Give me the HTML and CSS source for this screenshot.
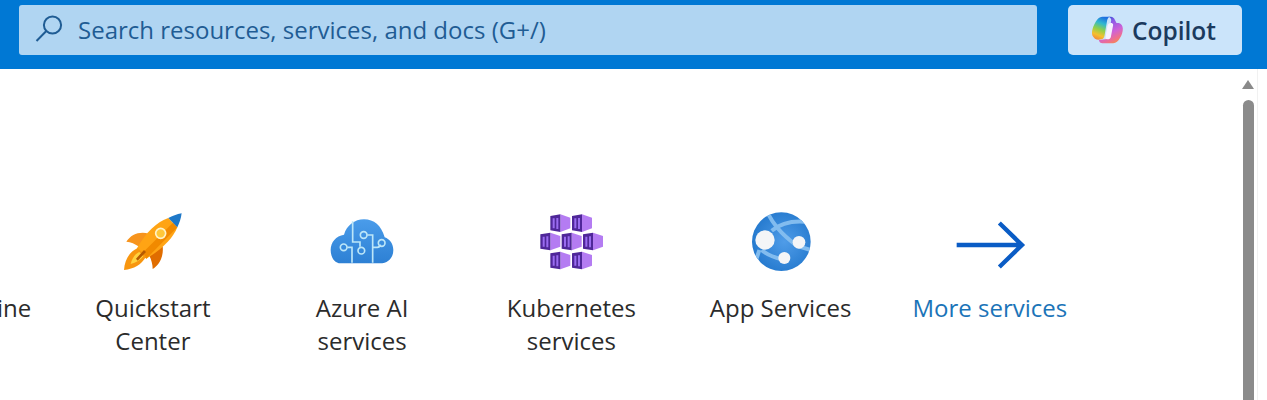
FILE: index.html
```html
<!DOCTYPE html>
<html lang="en">
<head>
<meta charset="utf-8">
<title>Azure services</title>
<link rel="stylesheet" href="styles.css">
</head>
<body>
<header class="topbar">
  <div class="search">
    <svg class="search-icon" viewBox="0 0 30 30" aria-hidden="true"><circle cx="18.5" cy="11" r="8.6"/><path d="M12.3 17 2.5 27"/></svg>
    <span>Search resources, services, and docs (G+/)</span>
  </div>
  <button class="copilot">
    <svg class="copilot-icon" viewBox="155 50 92 84" aria-hidden="true">
      <defs>
        <linearGradient id="cpL" x1="0.6" y1="0" x2="0.3" y2="1"><stop offset="0" stop-color="#1d6fe0"/><stop offset=".28" stop-color="#2fb8d0"/><stop offset=".55" stop-color="#8fd04a"/><stop offset=".8" stop-color="#f5c02e"/><stop offset="1" stop-color="#f28a3a"/></linearGradient>
        <linearGradient id="cpR" x1="0.25" y1="0" x2="0.7" y2="1"><stop offset="0" stop-color="#2050d0"/><stop offset=".25" stop-color="#8a5ae8"/><stop offset=".6" stop-color="#cf62d6"/><stop offset=".85" stop-color="#f0708a"/><stop offset="1" stop-color="#f58a50"/></linearGradient>
      </defs>
      <path fill="url(#cpR)" d="M203 52h8c6 0 10 4 12 9l5 10h7c7 2 12 9 12 17 0 9-3 19-9 29-5 8-11 15-20 15h-32c-6 0-10-4-11-10l20-2c6-1 9-6 10-12l7-44c1-6-3-11-9-12z"/>
      <path fill="url(#cpL)" d="M186 52h22c-5 2-7 6-8 11l-8 46c-1 6-4 10-10 11l-8 1c-8 0-14-5-18-12-2-5-2-12 0-19 3-11 8-22 15-30 4-5 9-8 15-8z"/>
      <path fill="#f6f2ff" d="M211 71c4 0 7 2 7 6l-7 36c-1 4-5 7-9 7-5 0-8-3-7-7l6-33c1-5 5-9 10-9z"/>
    </svg>
    <span>Copilot</span>
  </button>
</header>
<div class="page">
  <main class="content">
    <div class="tiles">
      <a class="tile">
        <span class="tile-icon"></span>
        <span class="label">Virtual machine</span>
      </a>
      <a class="tile">
        <svg class="tile-icon" viewBox="-6 0 330 240" aria-hidden="true">
          <path fill="#f7941d" d="M79 125c14-22 40-32 68-24l-28 40c-15-10-26-15-40-16z"/>
          <path fill="#e06d00" d="M158 207c18-10 34-36 30-68l-40 28c6 12 10 26 10 40z"/>
          <path fill="#ffa414" d="M205 54c-34 12-66 40-96 94l30 28c50-30 80-62 93-94z"/>
          <path fill="#f18a00" d="M232 82 139 176l-15-14 95-94z"/>
          <path fill="#1e78c8" d="M245 40c-15 3-28 8-40 14l27 28c6-12 11-27 13-42z"/>
          <path fill="#f8960f" d="M72 210c2-30 16-56 42-66l24 26c-14 24-36 36-66 40z"/>
          <path fill="#ffd23f" d="M92 192c4-16 12-30 26-36l12 12c-8 12-22 20-38 24z"/>
          <path fill="#b65a00" d="M108 176l24-26 6 6-25 26z"/>
          <circle cx="182" cy="100" r="15" fill="#ffc83a" stroke="#fff3c8" stroke-width="5"/>
        </svg>
        <span class="label">Quickstart Center</span>
      </a>
      <a class="tile">
        <svg class="tile-icon" viewBox="-9 0 330 240" aria-hidden="true">
          <defs><linearGradient id="cloud" x1="0" y1="0" x2="0" y2="1"><stop offset="0" stop-color="#4a9cea"/><stop offset="1" stop-color="#2d80d4"/></linearGradient></defs>
          <path fill="url(#cloud)" d="M92 190C72 190 62 170 62 150c0-24 16-42 40-46 8-28 32-46 60-46 30 0 52 18 62 54 16 6 26 20 26 38 0 24-16 40-40 40z"/>
          <g fill="none" stroke="#bce6f8" stroke-width="5">
            <path d="M128 64v62h22v14"/>
            <path d="M112 142h14v46"/>
            <path d="M172 105h16v83"/>
            <path d="M188 142h14c6 0 8-3 10-8"/>
            <circle cx="101" cy="142" r="10"/>
            <circle cx="154" cy="152" r="10"/>
            <circle cx="161" cy="105" r="10"/>
            <circle cx="215" cy="129" r="10"/>
          </g>
        </svg>
        <span class="label">Azure AI services</span>
      </a>
      <a class="tile">
        <svg class="tile-icon" viewBox="-13 0 330 240" aria-hidden="true">
          <defs>
            <g id="cube">
              <path fill="#b47cf2" d="M30 0 60 10V42L30 53z"/>
              <path fill="#4f2799" d="M0 5 30 0V53L0 48z"/>
              <path fill="#9a6cf0" d="M7 12h6v30H7zM18 11h6v33h-6z"/>
            </g>
          </defs>
          <use href="#cube" x="90" y="43"/>
          <use href="#cube" x="155" y="43"/>
          <use href="#cube" x="60" y="98"/>
          <use href="#cube" x="124" y="98"/>
          <use href="#cube" x="188" y="98"/>
          <use href="#cube" x="90" y="155"/>
          <use href="#cube" x="155" y="155"/>
        </svg>
        <span class="label">Kubernetes services</span>
      </a>
      <a class="tile">
        <svg class="tile-icon" viewBox="-12 0 330 240" aria-hidden="true">
          <defs>
            <radialGradient id="globe" cx=".55" cy=".5" r=".6"><stop offset="0" stop-color="#4f9ce8"/><stop offset="1" stop-color="#2277cc"/></radialGradient>
            <clipPath id="globeClip"><circle cx="154" cy="125" r="88"/></clipPath>
          </defs>
          <circle cx="154" cy="125" r="88" fill="url(#globe)"/>
          <g clip-path="url(#globeClip)" fill="none" stroke="#82bcef" stroke-width="12">
            <path d="M112 38c14 26 34 60 90 100l40 12"/>
            <path d="M125 92c24-20 60-32 110-26"/>
            <path d="M95 150c16 14 36 22 60 28"/>
            <path d="M88 150 70 205"/>
          </g>
          <circle cx="105" cy="120" r="29" fill="#f4f5f7"/>
          <circle cx="207" cy="127" r="19" fill="#f4f5f7"/>
          <circle cx="163" cy="174" r="18" fill="#f4f5f7"/>
        </svg>
        <span class="label">App Services</span>
      </a>
      <a class="tile more">
        <svg class="tile-icon" viewBox="105 0 330 240" aria-hidden="true">
          <path fill="none" stroke="#0a5cc5" stroke-width="13" d="M170 135H366M298 69l68 66-68 66"/>
        </svg>
        <span class="label">More services</span>
      </a>
    </div>
  </main>
  <aside class="scrollbar">
    <span class="arrow"></span>
    <span class="thumb"></span>
  </aside>
</div>
</body>
</html>
```
FILE: styles.css
```css
* { box-sizing: border-box; }
html, body { margin: 0; height: 400px; overflow: hidden; background: #fff; }
body { font-family: "Open Sans", "Noto Sans", sans-serif; }

.topbar {
  height: 69px;
  background: #0078d4;
  display: flex;
  align-items: flex-start;
  padding: 5px 25px 0 19px;
  gap: 31px;
}
.search {
  flex: 1;
  height: 50px;
  background: #b0d5f2;
  border-radius: 3px;
  display: flex;
  align-items: center;
  padding: 0 0 2px 15px;
  gap: 14px;
  color: #1f5c94;
  font-size: 24px;
}
.search-icon {
  width: 30px;
  height: 30px;
  fill: none;
  stroke: #1f5c94;
  stroke-width: 2;
}
.copilot {
  width: 174px;
  height: 50px;
  border: 0;
  border-radius: 5px;
  background: #cbe4fa;
  color: #1b3a5e;
  font: 600 24.5px "Open Sans", sans-serif;
  display: flex;
  align-items: center;
  justify-content: center;
  gap: 9px;
  padding: 0 2px 0 0;
}
.copilot-icon { width: 31px; height: 28px; }

.page { display: flex; height: 331px; }
.content { flex: 1; overflow: hidden; padding-top: 131px; }
.tiles { display: flex; margin-left: -161px; }
.tile {
  flex: 0 0 209.25px;
  display: flex;
  flex-direction: column;
  align-items: center;
  color: #2b2b2b;
  font-size: 24px;
  line-height: 33px;
  text-align: center;
}
.tile-icon { display: block; width: 110px; height: 80px; flex: none; }
.label { margin-top: 11px; width: 180px; }
.tile:first-child .label { width: 209px; white-space: nowrap; }
.more { color: #1b74b8; }

.scrollbar {
  flex: 0 0 16px;
  margin-right: 9px;
  display: flex;
  flex-direction: column;
  align-items: flex-start;
  padding: 11px 0 0;
  border-right: 1px solid #f1f1f1;
}
.arrow {
  width: 0;
  height: 0;
  border-left: 6.5px solid transparent;
  border-right: 6.5px solid transparent;
  border-bottom: 9px solid #8a8a8a;
}
.thumb {
  width: 11px;
  flex: 1;
  margin-top: 11px;
  margin-left: 1px;
  background: #8b8b8b;
  border-radius: 6px 6px 0 0;
}
```
